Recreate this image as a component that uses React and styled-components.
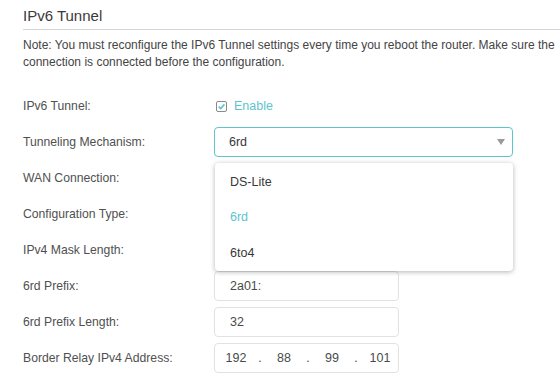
import React from "react";
import styled, { createGlobalStyle } from "styled-components";

const Global = createGlobalStyle`
  html, body { margin: 0; padding: 0; background: #fff; }
  body { font-family: "Liberation Sans", Arial, sans-serif; color: #333; }
`;

const TEAL = "#5cc5cd";

const Page = styled.div`
  position: relative;
  width: 560px;
  height: 392px;
  overflow: hidden;
  padding-left: 23px;
  box-sizing: border-box;
`;

const Title = styled.h2`
  margin: 0;
  padding-top: 6px;
  height: 23px;
  font-size: 15px;
  font-weight: normal;
  line-height: 20px;
  color: #3a3a3a;
  border-bottom: 1px solid #d4d4d4;
`;

const Note = styled.p`
  margin: 0;
  padding-top: 7px;
  font-size: 12px;
  line-height: 17px;
  color: #444;
  white-space: nowrap;
`;

const Form = styled.div`
  margin-top: 17px;
  display: grid;
  grid-template-columns: 191px 1fr;
  grid-auto-rows: 36px;
  align-items: center;
`;

const Label = styled.div`
  font-size: 12.2px;
  color: #505050;
`;

const Check = styled.label`
  display: flex;
  align-items: center;
  gap: 7px;
  margin-left: 2px;
  color: ${TEAL};
  font-size: 12.5px;
`;

const Box = styled.span`
  width: 11px;
  height: 11px;
  border: 1px solid #8a8a8a;
  border-radius: 2px;
  box-sizing: border-box;
  display: flex;
  align-items: center;
  justify-content: center;
`;

const Select = styled.div`
  width: 299px;
  height: 30px;
  box-sizing: border-box;
  border: 1px solid ${TEAL};
  border-radius: 4px;
  display: flex;
  align-items: center;
  justify-content: space-between;
  padding: 0 7px 0 14px;
  font-size: 12.5px;
  color: #383838;
`;

const Arrow = styled.span`
  width: 0;
  height: 0;
  border-left: 4.5px solid transparent;
  border-right: 4.5px solid transparent;
  border-top: 6px solid #9a9a9a;
`;

const Input = styled.div`
  width: 185px;
  height: 30px;
  box-sizing: border-box;
  border: 1px solid #e2e2e2;
  border-radius: 4px;
  display: flex;
  align-items: center;
  padding-left: ${(p) => (p.$ip ? 0 : 15)}px;
  font-size: 12.5px;
  color: #4a4a4a;
`;

const Seg = styled.span`
  width: 36px;
  text-align: center;
`;

const Dot = styled.span`
  width: 12px;
  text-align: center;
`;

const Menu = styled.div`
  position: absolute;
  left: 215px;
  top: 163px;
  width: 298px;
  height: 108px;
  background: #fff;
  border-radius: 4px;
  box-shadow: 0 1px 5px rgba(0, 0, 0, 0.3);
  display: flex;
  flex-direction: column;
  padding-top: 1px;
  box-sizing: border-box;
`;

const Item = styled.div`
  height: 35.5px;
  display: flex;
  align-items: center;
  padding-left: 15px;
  font-size: 12.5px;
  color: ${(p) => (p.$active ? TEAL : "#383838")};
`;

export default function App() {
  return (
    <>
      <Global />
      <Page>
        <Title>IPv6 Tunnel</Title>
        <Note>
          Note: You must reconfigure the IPv6 Tunnel settings every time you reboot the router. Make sure the
          <br />
          connection is connected before the configuration.
        </Note>
        <Form>
          <Label>IPv6 Tunnel:</Label>
          <Check>
            <Box>
              <svg width="9" height="9" viewBox="0 0 9 9">
                <path d="M1.6 4.6 L3.7 6.6 L7.4 2.4" fill="none" stroke={TEAL} strokeWidth="1.6" />
              </svg>
            </Box>
            Enable
          </Check>
          <Label>Tunneling Mechanism:</Label>
          <Select>
            6rd
            <Arrow />
          </Select>
          <Label>WAN Connection:</Label>
          <div />
          <Label>Configuration Type:</Label>
          <div />
          <Label>IPv4 Mask Length:</Label>
          <div />
          <Label>6rd Prefix:</Label>
          <Input>2a01:</Input>
          <Label>6rd Prefix Length:</Label>
          <Input>32</Input>
          <Label>Border Relay IPv4 Address:</Label>
          <Input $ip>
            <Seg style={{ marginLeft: 3 }}>192</Seg>
            <Dot>.</Dot>
            <Seg>88</Seg>
            <Dot>.</Dot>
            <Seg>99</Seg>
            <Dot>.</Dot>
            <Seg>101</Seg>
          </Input>
        </Form>
        <Menu>
          <Item>DS-Lite</Item>
          <Item $active>6rd</Item>
          <Item>6to4</Item>
        </Menu>
      </Page>
    </>
  );
}
